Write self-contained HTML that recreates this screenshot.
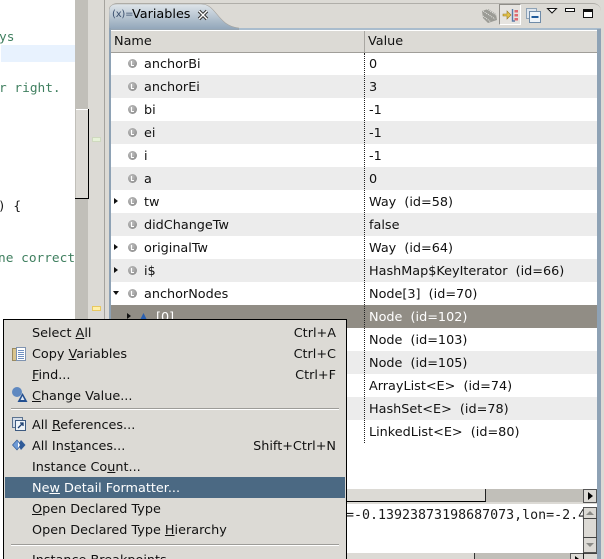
<!DOCTYPE html>
<html><head><meta charset="utf-8"><style>
html,body{margin:0;padding:0;background:#dcdad5}
#r{position:relative;width:604px;height:559px;overflow:hidden;background:#dcdad5;font-family:"DejaVu Sans",sans-serif;font-size:12.8px;color:#111}
.a{position:absolute}
.t{position:absolute;white-space:pre;line-height:16px}
.row{position:absolute;left:111px;width:486px;height:23px}
.n{left:144px}.v{left:369px}
.m{position:absolute;left:32px;white-space:pre;line-height:16px;font-size:12.8px;color:#111}
.m u{text-underline-offset:1px}
.c{position:absolute;font-family:"DejaVu Sans Mono",monospace;font-size:12.8px;white-space:pre;line-height:16px;color:#3f7f5f}
.k{position:absolute;white-space:pre;line-height:16px;font-size:12.8px;text-align:right;right:268px}
.sep{position:absolute;left:11px;width:328px;height:1px;background:#9d9c98;border-bottom:1px solid #fff}
.ic{position:absolute;left:128px;width:9px;height:9px;border-radius:50%;background:radial-gradient(circle at 40% 35%,#c2c2c2,#7f7f7f)}
.ic:after{content:"";position:absolute;left:3px;top:2px;width:3px;height:5px;border-left:1px solid #fff;border-bottom:1px solid #fff;box-sizing:border-box}
.tr{position:absolute;left:114px;width:0;height:0;border-left:4px solid #111;border-top:3px solid transparent;border-bottom:3px solid transparent}
</style></head><body><div id="r">

<!-- editor -->
<div class="a" style="left:0;top:0;width:75px;height:559px;background:#fff;overflow:hidden">
<div class="a" style="left:1px;top:45px;width:74px;height:17px;background:#e8f2fe"></div>
<div class="c" style="left:-1px;top:30px">ys</div>
<div class="c" style="left:-1px;top:81px">r right.</div>
<div class="c" style="left:-2px;top:251px">ne correct</div>
<div class="c" style="left:-2px;top:199px;color:#1a1a1a">) {</div>
</div>

<!-- editor scrollbar -->
<div class="a" style="left:75px;top:0;width:13px;height:559px;background:#c1bfb9"></div>
<div class="a" style="left:76px;top:109px;width:12px;height:89px;background:#dcdad5;border-top:1px solid #fff;box-sizing:border-box"></div>
<div class="a" style="left:88px;top:109px;width:1px;height:90px;background:#000"></div>
<div class="a" style="left:75px;top:198px;width:14px;height:1px;background:#000"></div>
<div class="a" style="left:89px;top:0;width:14px;height:559px;background:#dcdad5"></div>
<div class="a" style="left:92px;top:137px;width:7px;height:3px;background:#e6f2d8;border:1px solid #cfd9bf"></div>
<div class="a" style="left:92px;top:306px;width:7px;height:3px;background:#fff0a8;border:1px solid #e8c860"></div>
<div class="a" style="left:104px;top:0;width:1px;height:559px;background:#a5a39e"></div>

<!-- panel -->
<div class="a" style="left:109px;top:3px;width:492px;height:556px;background:#dcdad5;border-radius:8px 8px 0 0;border-top:1px solid #b0aea9;box-sizing:border-box"></div>
<svg class="a" style="left:109px;top:3px" width="130" height="27"><defs><linearGradient id="g" x1="0" y1="0" x2="0" y2="1"><stop offset="0" stop-color="#dfe5ea"/><stop offset="1" stop-color="#8fa4b8"/></linearGradient></defs><path d="M0 27V8Q0 1 8 1H92C108 1 108 23 130 25V27Z" fill="url(#g)" stroke="#a5a39e" stroke-width="0.6"/></svg>
<div class="a" style="left:239px;top:28px;width:362px;height:2px;background:#a9bccd"></div>
<div class="a" style="left:109px;top:28px;width:2px;height:531px;background:#8ea2b5"></div>
<div class="a" style="left:597px;top:29px;width:4px;height:530px;background:#8ea2b5"></div>
<div class="t" style="left:112px;top:7px;font-size:10px;color:#3a4f6e;letter-spacing:-.2px">(x)=</div>
<div class="t" style="left:132px;top:7px;font-size:12.8px;color:#000">Variables</div>
<svg class="a" style="left:197px;top:9px" width="12" height="12"><path d="M2 2L10 10M10 2L2 10" stroke="#333" stroke-width="3.4"/><path d="M2 2L10 10M10 2L2 10" stroke="#fff" stroke-width="1.4"/></svg>

<!-- toolbar -->
<svg class="a" style="left:480px;top:6px" width="20" height="18"><path d="M2 5L8 3L16 8L17 14L8 17L3 12Z" fill="#8f8f8a" opacity=".85"/><path d="M3 5L15 13M7 3L16 9M3 10L11 16" stroke="#e8e8e4" stroke-width="1" stroke-dasharray="1 1"/></svg>
<div class="a" style="left:499px;top:4px;width:22px;height:21px;background:#e6e4e0;border:1px solid;border-color:#8f8d88 #fff #fff #8f8d88;box-sizing:border-box"></div>
<svg class="a" style="left:502px;top:7px" width="17" height="16"><path d="M1 7H5V4L9 8L5 12V9H1Z" fill="#e2c24a" stroke="#9a7a20" stroke-width=".6"/><path d="M10.5 2V14H13" fill="none" stroke="#5a7ba8" stroke-width="1.4"/><rect x="12.5" y="3" width="3.5" height="2.5" fill="#e06a70"/><rect x="12.5" y="7" width="3.5" height="2.5" fill="#e06a70"/><rect x="12.5" y="11" width="3.5" height="2.5" fill="#e06a70"/></svg>
<svg class="a" style="left:526px;top:8px" width="15" height="15"><rect x=".5" y=".5" width="10" height="10" fill="#dfe6ee" stroke="#8ea2b5"/><rect x="3.5" y="3.5" width="11" height="11" fill="#eef3f8" stroke="#6f8ba8"/><rect x="5.5" y="8" width="7" height="2" fill="#1f5a9a"/></svg>
<svg class="a" style="left:546px;top:7px" width="13" height="8"><path d="M1.5 1.5H10.5L6 6Z" fill="#fff" stroke="#111"/></svg>
<div class="a" style="left:565px;top:8px;width:8px;height:2px;background:#fff;border:1px solid #111"></div>
<div class="a" style="left:583px;top:9px;width:8px;height:5px;background:#fff;border:1px solid #111;border-top-width:3px"></div>

<!-- table -->
<div class="a" style="left:111px;top:30px;width:486px;height:1px;background:#fff"></div>
<div class="a" style="left:111px;top:31px;width:486px;height:22px;background:#dcdad5;border-bottom:1px solid #a09e99;box-sizing:border-box"></div>
<div class="a" style="left:364px;top:31px;width:1px;height:21px;background:#a9a7a2"></div>
<div class="t" style="left:114px;top:34px">Name</div>
<div class="t" style="left:368px;top:34px">Value</div>
<div class="a" style="left:111px;top:53px;width:486px;height:436px;background:#fff"></div>
<div class="row" style="top:75px;background:#ececec"></div>
<div class="row" style="top:121px;background:#ececec"></div>
<div class="row" style="top:167px;background:#ececec"></div>
<div class="row" style="top:213px;background:#ececec"></div>
<div class="row" style="top:259px;background:#ececec"></div>
<div class="row" style="top:305px;background:#918d85"></div>
<div class="row" style="top:351px;background:#ececec"></div>
<div class="row" style="top:397px;background:#ececec"></div>
<div class="a" style="left:364px;top:53px;width:0;height:390px;border-left:1px dotted #222"></div>

<div class="ic" style="top:59px"></div><div class="t n" style="top:57px">anchorBi</div><div class="t v" style="top:57px">0</div>
<div class="ic" style="top:82px"></div><div class="t n" style="top:80px">anchorEi</div><div class="t v" style="top:80px">3</div>
<div class="ic" style="top:105px"></div><div class="t n" style="top:103px">bi</div><div class="t v" style="top:103px">-1</div>
<div class="ic" style="top:128px"></div><div class="t n" style="top:126px">ei</div><div class="t v" style="top:126px">-1</div>
<div class="ic" style="top:151px"></div><div class="t n" style="top:149px">i</div><div class="t v" style="top:149px">-1</div>
<div class="ic" style="top:174px"></div><div class="t n" style="top:172px">a</div><div class="t v" style="top:172px">0</div>
<div class="tr" style="top:198px"></div><div class="ic" style="top:197px"></div><div class="t n" style="top:195px">tw</div><div class="t v" style="top:195px">Way  (id=58)</div>
<div class="ic" style="top:220px"></div><div class="t n" style="top:218px">didChangeTw</div><div class="t v" style="top:218px">false</div>
<div class="tr" style="top:244px"></div><div class="ic" style="top:243px"></div><div class="t n" style="top:241px">originalTw</div><div class="t v" style="top:241px">Way  (id=64)</div>
<div class="tr" style="top:267px"></div><div class="ic" style="top:266px"></div><div class="t n" style="top:264px">i$</div><div class="t v" style="top:264px">HashMap$KeyIterator  (id=66)</div>
<div class="a" style="left:113px;top:291px;width:0;height:0;border-top:4px solid #111;border-left:3px solid transparent;border-right:3px solid transparent"></div><div class="ic" style="top:289px"></div><div class="t n" style="top:287px">anchorNodes</div><div class="t v" style="top:287px">Node[3]  (id=70)</div>
<div class="tr" style="top:313px;left:127px"></div>
<svg class="a" style="left:140px;top:313px" width="7" height="7"><path d="M3.5 0L7 7H0Z" fill="#2a5fb0"/></svg>
<div class="t" style="left:156px;top:310px;color:#fff">[0]</div>
<div class="t v" style="top:310px;color:#fff">Node  (id=102)</div>
<div class="t v" style="top:333px">Node  (id=103)</div>
<div class="t v" style="top:356px">Node  (id=105)</div>
<div class="t v" style="top:379px">ArrayList&lt;E&gt;  (id=74)</div>
<div class="t v" style="top:402px">HashSet&lt;E&gt;  (id=78)</div>
<div class="t v" style="top:425px">LinkedList&lt;E&gt;  (id=80)</div>

<!-- table h scrollbar -->
<div class="a" style="left:111px;top:489px;width:375px;height:13px;background:#dcdad5;border-bottom:1px solid #000;border-right:1px solid #222;box-sizing:border-box"></div>
<div class="a" style="left:486px;top:489px;width:97px;height:13px;background:#c1bfb9"></div>
<div class="a" style="left:583px;top:489px;width:14px;height:14px;background:#dcdad5;border:1px solid #555;box-sizing:border-box"></div>
<div class="a" style="left:588px;top:492px;width:0;height:0;border-left:5px solid #000;border-top:4px solid transparent;border-bottom:4px solid transparent"></div>

<!-- detail pane -->
<div class="a" style="left:346px;top:503px;width:251px;height:1px;background:#dcdad5"></div>
<div class="a" style="left:346px;top:504px;width:251px;height:49px;background:#fff"></div>
<div class="a" style="left:346px;top:508px;font-family:'DejaVu Sans Mono',monospace;font-size:13.3px;line-height:16px;white-space:pre;width:237px;overflow:hidden;color:#1a1a1a">=-0.13923873198687073,lon=-2.4</div>
<div class="a" style="left:583px;top:507px;width:14px;height:46px;background:#dcdad5;border:1px solid #555;box-sizing:border-box"></div>
<div class="a" style="left:583px;top:518px;width:14px;height:1px;background:#444"></div>
<div class="a" style="left:583px;top:537px;width:14px;height:1px;background:#444"></div>
<div class="a" style="left:586px;top:511px;width:0;height:0;border-bottom:4px solid #8a8a86;border-left:4px solid transparent;border-right:4px solid transparent"></div>
<div class="a" style="left:586px;top:543px;width:0;height:0;border-top:4px solid #8a8a86;border-left:4px solid transparent;border-right:4px solid transparent"></div>
<div class="a" style="left:346px;top:553px;width:129px;height:6px;background:#dcdad5;border-right:1px solid #333;box-sizing:border-box"></div>
<div class="a" style="left:475px;top:553px;width:95px;height:6px;background:#c1bfb9"></div>
<div class="a" style="left:570px;top:553px;width:13px;height:6px;background:#dcdad5;border-left:1px solid #555;border-top:1px solid #555;box-sizing:border-box"></div>
<div class="a" style="left:575px;top:556px;width:0;height:0;border-left:4px solid #000;border-top:3px solid transparent;border-bottom:3px solid transparent"></div>
<div class="a" style="left:583px;top:553px;width:14px;height:1px;background:#444"></div>
<div class="a" style="left:583px;top:553px;width:1px;height:6px;background:#222"></div>

<!-- context menu -->
<div class="a" style="left:3px;top:319px;width:344px;height:240px;background:#dcdad5;border:1px solid #000;border-bottom:0;box-sizing:border-box"></div>
<div class="a" style="left:5px;top:477px;width:340px;height:21px;background:#4b6983"></div>

<div class="m" style="top:326px">Select <u>A</u>ll</div><div class="k" style="top:326px">Ctrl+A</div>
<div class="m" style="top:347px">Copy <u>V</u>ariables</div><div class="k" style="top:347px">Ctrl+C</div>
<div class="m" style="top:368px"><u>F</u>ind...</div><div class="k" style="top:368px">Ctrl+F</div>
<div class="m" style="top:389px"><u>C</u>hange Value...</div>
<div class="sep" style="top:408px"></div>
<div class="m" style="top:418px">All <u>R</u>eferences...</div>
<div class="m" style="top:439px">All Ins<u>t</u>ances...</div><div class="k" style="top:439px">Shift+Ctrl+N</div>
<div class="m" style="top:460px">Instance Co<u>u</u>nt...</div>
<div class="m" style="top:481px;color:#fff">Ne<u>w</u> Detail Formatter...</div>
<div class="m" style="top:502px"><u>O</u>pen Declared Type</div>
<div class="m" style="top:523px">Open Declared Type <u>H</u>ierarchy</div>
<div class="sep" style="top:544px"></div>
<div class="m" style="top:553px">Instance Breakpoints</div>

<svg class="a" style="left:11px;top:346px" width="16" height="16"><rect x="1.5" y="2.5" width="10" height="12" fill="#d9c48e" stroke="#9a8a60"/><rect x="5.5" y="1.5" width="9" height="13" fill="#fff" stroke="#7f93b0"/><path d="M7 4.5H13M7 6.5H13M7 8.5H13M7 10.5H13M7 12.5H13" stroke="#6f8fc0"/></svg>
<svg class="a" style="left:11px;top:387px" width="17" height="16"><circle cx="6" cy="5" r="5" fill="#5f88c0"/><path d="M11.5 6L16.5 15H6.5Z" fill="#234f90"/><path d="M11.5 9L13.5 13H9.5Z" fill="#dfe8f4"/></svg>
<svg class="a" style="left:12px;top:417px" width="15" height="15"><rect x=".5" y=".5" width="10" height="10" fill="#d5dde8" stroke="#5c7390"/><rect x="3.5" y="3.5" width="10" height="10" fill="#eef3f8" stroke="#3d5a80"/><path d="M6 11L11 6M8 6H11V9" stroke="#1d3f70" fill="none" stroke-width="1.3"/></svg>
<svg class="a" style="left:12px;top:439px" width="14" height="12"><path d="M5 1L0.5 6L5 11L9 6Z" fill="#6f9bd6" stroke="#2f5a98" stroke-width=".7"/><path d="M9 1L13.5 6L9 11L6 6Z" fill="#2f5a98"/><path d="M6 3L8 6L6 9" fill="#fff"/></svg>
</div></body></html>
